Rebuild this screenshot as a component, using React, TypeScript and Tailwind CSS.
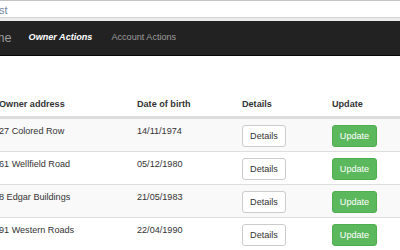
const ROWS = [
  { address: "27 Colored Row", dob: "14/11/1974" },
  { address: "61 Wellfield Road", dob: "05/12/1980" },
  { address: "8 Edgar Buildings", dob: "21/05/1983" },
  { address: "91 Western Roads", dob: "22/04/1990" },
];

export default function App() {
  return (
    <div className="w-[400px] h-[250px] overflow-hidden bg-white font-['Liberation_Sans',Arial,sans-serif] text-[#333]">
      {/* address bar strip */}
      <div className="h-[18px] border-t border-[#c4c4c4] border-b border-b-[#d4d4d4] bg-white flex items-center pt-[2px]">
        <span className="text-[11px] text-[#7687a0] ml-[-1px]">st</span>
      </div>
      <div className="h-[3px] bg-[#ececec]" />

      {/* navbar */}
      <nav className="h-[35px] bg-[#222] border-b border-[#080808] flex items-center whitespace-nowrap">
        <span className="text-[12.6px] text-[#9d9d9d] ml-[-22px]">Home</span>
        <a className="ml-[17px] text-[9.1px] font-bold italic text-white">Owner Actions</a>
        <a className="ml-[19px] text-[9.1px] text-[#9d9d9d]">Account Actions</a>
      </nav>

      {/* table */}
      <div className="mt-[37px] ml-[-7px] text-[9.1px] leading-[13px]">
        <div className="grid grid-cols-[138px_105px_90px_1fr] h-[25px] border-b-2 border-[#ddd] items-center font-bold">
          <div className="px-[6px]">Owner address</div>
          <div className="px-[6px]">Date of birth</div>
          <div className="px-[6px]">Details</div>
          <div className="px-[6px]">Update</div>
        </div>
        {ROWS.map((r, i) => (
          <div
            key={r.address}
            className={`grid grid-cols-[138px_105px_90px_1fr] h-[33px] pt-[6px] border-t border-[#ddd] first:border-t-0 ${
              i % 2 === 0 ? "bg-[#f9f9f9]" : "bg-white"
            }`}
          >
            <div className="px-[6px] whitespace-nowrap">{r.address}</div>
            <div className="px-[6px]">{r.dob}</div>
            <div className="px-[6px]">
              <button className="h-[22px] w-[44px] rounded-[3px] border border-[#ccc] bg-white text-[#333]">
                Details
              </button>
            </div>
            <div className="px-[6px]">
              <button className="h-[22px] w-[45px] rounded-[3px] border border-[#4cae4c] bg-[#5cb85c] text-white">
                Update
              </button>
            </div>
          </div>
        ))}
      </div>
    </div>
  );
}
